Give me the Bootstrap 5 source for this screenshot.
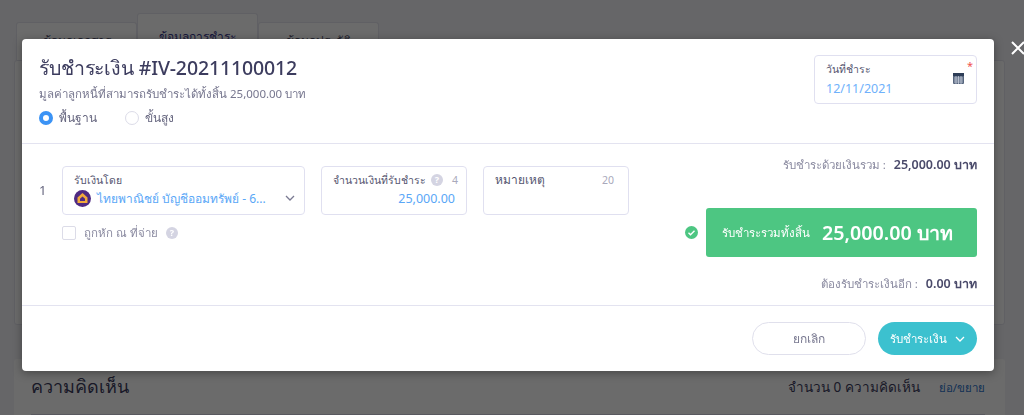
<!DOCTYPE html>
<html lang="th">
<head>
    <meta charset="UTF-8">
    <meta name="viewport" content="width=device-width, initial-scale=1.0">
    <title>รับชำระเงิน</title>
    <link rel="stylesheet" href="https://cdn.jsdelivr.net/npm/bootstrap@5.3.0/dist/css/bootstrap.min.css">
    <style>
        html, body {
            height: 415px;
            overflow: hidden;
        }
        body {
            background-color: #f4f4f7;
            font-family: "Noto Sans", "Open Sans", sans-serif;
            color: #3c3c5e;
            font-size: 13px;
        }
        .modal-backdrop {
            --bs-backdrop-opacity: .58;
        }
        /* page behind the modal */
        .page-wrap {
            padding: 12px 19px 0 14px;
        }
        .tab-row {
            display: flex;
            align-items: flex-end;
            padding-left: 2px;
            height: 48px;
        }
        .tab-item {
            width: 121px;
            height: 38px;
            background: #fff;
            border: 1px solid #e4e4ee;
            border-bottom: 0;
            border-radius: 3px 3px 0 0;
            text-align: center;
            padding-top: 9px;
            font-size: 12px;
            color: #55556f;
        }
        .tab-item.tab-on {
            height: 47px;
            color: #3a3a8c;
            font-weight: 500;
            padding-top: 14px;
        }
        .back-panel {
            height: 265px;
            background: #fff;
            border: 1px solid #e4e4ee;
            border-radius: 3px;
        }
        .back-comments {
            margin-top: 34px;
            height: 60px;
            background: #fff;
            border-radius: 3px;
            padding: 14px 20px 0 17px;
        }
        .back-title {
            font-size: 18px;
            border-bottom: 1px solid #d5d5e2;
            height: 42px;
        }
        .back-link {
            color: #2f73c9;
            font-size: 11.5px;
            margin-left: 3px;
        }
        .back-count {
            font-size: 13.5px;
        }
        /* modal */
        .pay-close {
            position: absolute;
            top: 41px;
            left: 1011px;
            z-index: 1060;
        }
        .pay-box {
            position: absolute;
            top: 39px;
            left: 22px;
            width: 972px;
            height: 332px;
            z-index: 1056;
            background: #fff;
            border-radius: 4px;
            box-shadow: 0 2px 10px rgba(0, 0, 0, .35);
            display: flex;
            flex-direction: column;
        }
        .pay-head {
            height: 105px;
            padding: 16px 17px 0 17px;
            border-bottom: 1px solid #e3e3f0;
        }
        .pay-title {
            font-size: 19.5px;
            line-height: 26px;
            font-weight: 500;
            letter-spacing: -.15px;
            margin: 0;
            color: #3c3c5e;
        }
        .pay-sub {
            font-size: 11.5px;
            line-height: 18px;
            margin-top: 4px;
            color: #77778f;
        }
        .radio-row {
            margin-top: 7px;
            gap: 28px;
            line-height: 16px;
            font-size: 12px;
            color: #66667f;
        }
        .radio-dot {
            width: 14px;
            height: 14px;
            border-radius: 50%;
            border: 1px solid #dcdce8;
            margin-right: 6px;
            background: #fff;
        }
        .radio-dot.radio-on {
            border: 4px solid #3b93f5;
        }
        .field-box {
            border: 1px solid #e0e0f0;
            border-radius: 4px;
            background: #fff;
            position: relative;
        }
        .date-box {
            width: 163px;
            height: 49px;
            padding: 5px 11px;
        }
        .field-label {
            font-size: 10.5px;
            line-height: 16px;
            white-space: nowrap;
            color: #55556f;
        }
        .date-val {
            font-size: 12.5px;
            line-height: 19px;
            margin-top: 2px;
            color: #6fb1fb;
        }
        .req-star {
            position: absolute;
            top: 4px;
            right: 3px;
            color: #f0524f;
            font-size: 11px;
            line-height: 11px;
        }
        .cal-icon {
            position: absolute;
            top: 16px;
            right: 12px;
        }
        .pay-body {
            height: 162px;
            padding: 0 17px;
            border-bottom: 1px solid #e3e3f0;
        }
        .row-no {
            width: 23px;
            padding-top: 37px;
            color: #66667f;
        }
        .lines-col {
            padding-top: 22px;
            width: 567px;
        }
        .fields-row {
            gap: 16px;
        }
        .by-box {
            width: 243px;
            height: 49px;
            padding: 5px 11px;
        }
        .amount-box {
            width: 146px;
            height: 49px;
            padding: 5px 11px 5px 11px;
        }
        .note-box {
            width: 146px;
            height: 49px;
            padding: 5px 14px 5px 11px;
        }
        .note-label {
            font-size: 12px;
        }
        .bank-line {
            color: #5aa7f7;
            font-size: 12px;
            line-height: 19px;
            margin-top: 1px;
            white-space: nowrap;
        }
        .bank-logo {
            margin-right: 6px;
            flex: none;
        }
        .chev-pos {
            position: absolute;
            top: 28px;
            right: 9px;
        }
        .count-num {
            color: #a9a9bb;
            font-size: 10.5px;
        }
        .amount-help {
            margin-left: 5px;
            margin-right: 9px;
        }
        .amount-val {
            color: #5aa7f7;
            text-align: right;
            line-height: 19px;
            font-size: 12.5px;
            margin-top: 1px;
        }
        .wh-line {
            margin-top: 10px;
            line-height: 16px;
            color: #8a8aa0;
            font-size: 11.5px;
        }
        .wh-check {
            width: 14px;
            height: 14px;
            border: 1px solid #dcdce8;
            border-radius: 2px;
            margin-right: 8px;
        }
        .help-dot {
            width: 12px;
            height: 12px;
            border-radius: 50%;
            background: #d4d4e2;
            color: #fff;
            font-size: 9px;
            line-height: 12px;
            text-align: center;
            font-weight: 700;
            flex: none;
            display: inline-block;
        }
        .sum-col {
            flex: 1;
            align-items: flex-end;
            padding-top: 11px;
        }
        .sum-line {
            line-height: 20px;
            color: #8a8aa0;
            font-size: 11.5px;
        }
        .sum-line b {
            color: #4a4a6a;
            font-weight: 600;
            font-size: 12.5px;
            margin-left: 5px;
        }
        .sum-green-row {
            margin-top: 33px;
            margin-bottom: 17px;
        }
        .sum-green {
            width: 271px;
            height: 49px;
            margin-left: 8px;
            background: #4dc682;
            border-radius: 3px;
            color: #fff;
            padding-left: 16px;
        }
        .sum-green-text {
            font-size: 11.5px;
        }
        .sum-green-num {
            font-size: 19.7px;
            font-weight: 600;
            margin-left: 12px;
        }
        .pay-foot {
            flex: 1;
            padding: 0 17px;
            gap: 12px;
        }
        .btn-cancel {
            width: 114px;
            height: 33px;
            border: 1px solid #e0e0ec;
            border-radius: 17px;
            color: #77778f;
            background: #fff;
            font-size: 12px;
            padding: 0;
        }
        .btn-pay {
            width: 99px;
            height: 33px;
            border: 0;
            border-radius: 17px;
            color: #fff;
            background: #3cc1cf;
            font-size: 11.5px;
            padding: 0;
        }
    </style>
</head>
<body>
    <div class="page-wrap">
        <div class="tab-row">
            <div class="tab-item">ข้อมูลเอกสาร</div>
            <div class="tab-item tab-on">ข้อมูลการชำระ</div>
            <div class="tab-item">ข้อมูลประวัติ</div>
        </div>
        <div class="back-panel"></div>
        <div class="back-comments">
            <div class="back-title d-flex justify-content-between align-items-start">
                <span>ความคิดเห็น</span>
                <span class="d-flex align-items-center gap-3 pt-1">
                    <span class="back-count">จำนวน 0 ความคิดเห็น</span>
                    <span class="back-link">ย่อ/ขยาย</span>
                </span>
            </div>
        </div>
    </div>

    <div class="modal-backdrop show"></div>

    <svg class="pay-close" width="14" height="14" viewBox="0 0 14 14">
        <path d="M1 1l12 12M13 1L1 13" stroke="#fff" stroke-width="2" fill="none"/>
    </svg>

    <div class="pay-box">
        <div class="pay-head d-flex justify-content-between">
            <div>
                <h5 class="pay-title">รับชำระเงิน #IV-20211100012</h5>
                <div class="pay-sub">มูลค่าลูกหนี้ที่สามารถรับชำระได้ทั้งสิ้น 25,000.00 บาท</div>
                <div class="radio-row d-flex">
                    <span class="d-flex align-items-center"><span class="radio-dot radio-on"></span>พื้นฐาน</span>
                    <span class="d-flex align-items-center"><span class="radio-dot"></span>ขั้นสูง</span>
                </div>
            </div>
            <div class="field-box date-box">
                <div class="field-label">วันที่ชำระ</div>
                <div class="date-val">12/11/2021</div>
                <span class="req-star">*</span>
                <svg class="cal-icon" width="11" height="12" viewBox="0 0 11 12">
                    <rect x="0" y="1" width="11" height="11" rx="1" fill="#56657d"/>
                    <rect x="0" y="1" width="11" height="3" fill="#2e3d57"/>
                    <path d="M1 6h9M1 8h9M1 10h9M3 4v8M5.500 4v8M8 4v8" stroke="#cfd6e2" stroke-width=".7"/>
                </svg>
            </div>
        </div>

        <div class="pay-body d-flex">
            <div class="row-no">1</div>
            <div class="lines-col">
                <div class="fields-row d-flex">
                    <div class="field-box by-box">
                        <div class="field-label">รับเงินโดย</div>
                        <div class="bank-line d-flex align-items-center">
                            <svg class="bank-logo" width="17" height="17" viewBox="0 0 17 17">
                                <circle cx="8.500" cy="8.500" r="8.500" fill="#4f2a82"/>
                                <path d="M8.500 3L13.500 7.500V13H3.500V7.500Z" fill="#f2a93b"/>
                                <path d="M8.500 6.500L11 8.800V11H6V8.800Z" fill="#4f2a82"/>
                            </svg>
                            <span>ไทยพาณิชย์ บัญชีออมทรัพย์ - 6...</span>
                        </div>
                        <svg class="chev-pos" width="10" height="6" viewBox="0 0 10 6">
                            <path d="M1 1l4 4 4-4" stroke="#7a7a92" stroke-width="1.300" fill="none"/>
                        </svg>
                    </div>
                    <div class="field-box amount-box">
                        <div class="field-label d-flex align-items-center">
                            <span>จำนวนเงินที่รับชำระ</span>
                            <span class="help-dot amount-help">?</span>
                            <span class="count-num">4</span>
                        </div>
                        <div class="amount-val">25,000.00</div>
                    </div>
                    <div class="field-box note-box">
                        <div class="field-label note-label d-flex justify-content-between">
                            <span>หมายเหตุ</span>
                            <span class="count-num">20</span>
                        </div>
                    </div>
                </div>
                <div class="wh-line d-flex align-items-center">
                    <span class="wh-check"></span>
                    <span>ถูกหัก ณ ที่จ่าย</span>
                    <span class="help-dot ms-2">?</span>
                </div>
            </div>
            <div class="sum-col d-flex flex-column">
                <div class="sum-line">รับชำระด้วยเงินรวม : <b>25,000.00 บาท</b></div>
                <div class="sum-green-row d-flex align-items-center">
                    <svg width="13" height="13" viewBox="0 0 13 13">
                        <circle cx="6.500" cy="6.500" r="6.500" fill="#4dc682"/>
                        <path d="M3.500 6.700l2 2 4-4" stroke="#fff" stroke-width="1.400" fill="none"/>
                    </svg>
                    <div class="sum-green d-flex align-items-center">
                        <span class="sum-green-text">รับชำระรวมทั้งสิ้น</span>
                        <span class="sum-green-num">25,000.00 บาท</span>
                    </div>
                </div>
                <div class="sum-line">ต้องรับชำระเงินอีก : <b>0.00 บาท</b></div>
            </div>
        </div>

        <div class="pay-foot d-flex justify-content-end align-items-center">
            <button type="button" class="btn btn-cancel">ยกเลิก</button>
            <button type="button" class="btn btn-pay d-flex align-items-center justify-content-center gap-2">
                รับชำระเงิน
                <svg width="10" height="6" viewBox="0 0 10 6"><path d="M1 1l4 4 4-4" stroke="#fff" stroke-width="1.300" fill="none"/></svg>
            </button>
        </div>
    </div>

    <script src="https://cdn.jsdelivr.net/npm/bootstrap@5.3.0/dist/js/bootstrap.bundle.min.js"></script>
</body>
</html>
